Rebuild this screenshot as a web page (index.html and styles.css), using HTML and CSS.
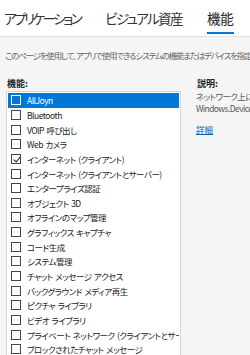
FILE: index.html
```html
<!DOCTYPE html>
<html lang="ja">
  <head>
    <meta charset="UTF-8" />
    <meta name="viewport" content="width=device-width, initial-scale=1.0" />
    <title>機能</title>
    <link rel="stylesheet" href="styles.css">
  </head>
  <body>
    <div class="tabs">
      <span class="tab first">アプリケーション</span>
      <span class="tab second">ビジュアル資産</span>
      <span class="tab active">機能</span>
    </div>
    <p class="intro">このページを使用して、アプリで使用できるシステムの機能またはデバイスを指定します。</p>
    <div class="panel">
      <div class="caps">
        <div class="label">機能:</div>
        <ul class="cap-list">
          <li class="selected"><span class="box"></span>AllJoyn</li>
          <li><span class="box"></span>Bluetooth</li>
          <li><span class="box"></span>VOIP 呼び出し</li>
          <li><span class="box"></span>Web カメラ</li>
          <li><span class="box checked"></span>インターネット (クライアント)</li>
          <li><span class="box"></span>インターネット (クライアントとサーバー)</li>
          <li><span class="box"></span>エンタープライズ認証</li>
          <li><span class="box"></span>オブジェクト 3D</li>
          <li><span class="box"></span>オフラインのマップ管理</li>
          <li><span class="box"></span>グラフィックス キャプチャ</li>
          <li><span class="box"></span>コード生成</li>
          <li><span class="box"></span>システム管理</li>
          <li><span class="box"></span>チャット メッセージ アクセス</li>
          <li><span class="box"></span>バックグラウンド メディア再生</li>
          <li><span class="box"></span>ピクチャ ライブラリ</li>
          <li><span class="box"></span>ビデオ ライブラリ</li>
          <li><span class="box"></span>プライベート ネットワーク (クライアントとサーバー)</li>
          <li><span class="box"></span>ブロックされたチャット メッセージ</li>
        </ul>
      </div>
      <div class="desc">
        <div class="label">説明:</div>
        <p class="desc-text">ネットワーク上にあるサービスへの接続を許可します。<br>Windows.Devices</p>
        <a class="more" href="#">詳細</a>
      </div>
    </div>
  </body>
</html>
```

FILE: styles.css
```css
body {
  margin: 0;
  background: #f5f5f5;
  color: #222;
  font-family: "Noto Sans CJK JP", "Noto Sans", sans-serif;
  font-feature-settings: "palt";
  overflow: hidden;
  height: 355px;
}
.tabs {
  display: flex;
  gap: 25px;
  height: 37px;
  padding-left: 4px;
  background: #fff;
  border-bottom: 1px solid #e3e3e3;
  box-sizing: border-box;
  align-items: flex-end;
  overflow: hidden;
}
.tab {
  font-size: 13.5px;
  line-height: 20px;
  padding-bottom: 8px;
  color: #333;
  white-space: nowrap;
}
.tab.first {
  letter-spacing: -2.5px;
}
.tab.second {
  letter-spacing: -1.6px;
}
.tab.active {
  color: #222;
  position: relative;
}
.tab.active::after {
  content: "";
  position: absolute;
  left: 0;
  right: 0;
  bottom: 2px;
  height: 2px;
  background: #0078d7;
}
.intro {
  margin: 12px 0 0 5px;
  font-size: 8.5px;
  line-height: 12px;
  letter-spacing: -1.2px;
  color: #666;
  white-space: nowrap;
  overflow: hidden;
}
.panel {
  display: flex;
  margin-top: 17px;
  padding-left: 6px;
  gap: 15px;
}
.label {
  font-size: 9px;
  font-weight: bold;
  line-height: 12px;
  margin-bottom: 1px;
  padding-left: 1px;
}
.cap-list {
  list-style: none;
  margin: 0;
  padding: 1px;
  width: 175px;
  box-sizing: border-box;
  background: #fff;
  border: 1px solid #d5d5d5;
  height: 270px;
}
.cap-list li {
  display: flex;
  align-items: center;
  height: 14.65px;
  padding-left: 3px;
  font-size: 8.5px;
  letter-spacing: -0.5px;
  word-spacing: 1px;
  white-space: nowrap;
  overflow: hidden;
}
.cap-list li.selected {
  background: #0078d7;
  color: #fff;
}
.box {
  flex: none;
  width: 10px;
  height: 10px;
  margin-right: 6px;
  border: 1px solid #444;
  background: #fff;
  box-sizing: border-box;
  position: relative;
}
.selected .box {
  border-color: #fff;
  background: #0078d7;
}
.box.checked::after {
  content: "";
  position: absolute;
  left: 2.5px;
  top: 0;
  width: 3px;
  height: 6px;
  border: solid #222;
  border-width: 0 1px 1px 0;
  transform: rotate(40deg);
}
.desc {
  flex: 1;
  min-width: 0;
  white-space: nowrap;
  overflow: hidden;
}
.desc-text {
  margin: 1px 0 0;
  font-size: 8.5px;
  line-height: 11.5px;
  letter-spacing: -0.6px;
  color: #555;
}
.more {
  display: inline-block;
  margin-top: 2px;
  font-size: 8.5px;
  line-height: 12px;
  color: #0063b1;
}
```
